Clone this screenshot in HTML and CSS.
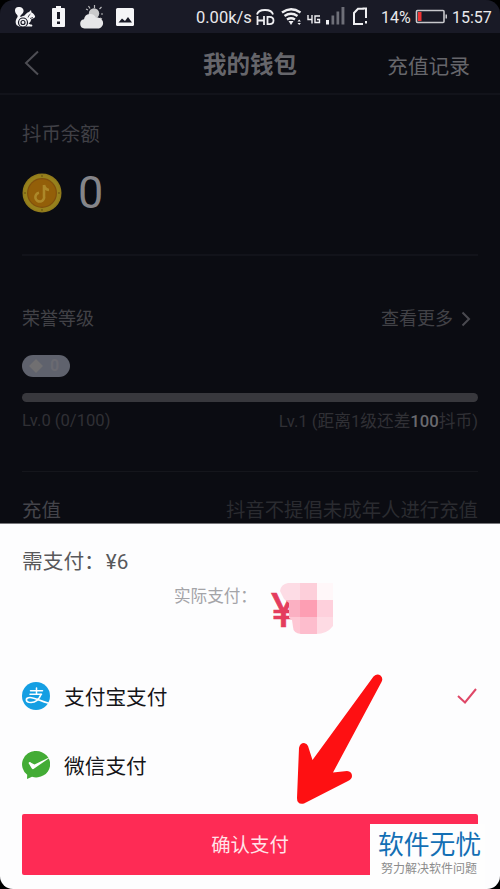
FILE: index.html
```html
<!DOCTYPE html>
<html lang="zh-CN">
<head>
<meta charset="utf-8">
<title>我的钱包</title>
<link rel="stylesheet" href="styles.css">
</head>
<body>
<div class="phone">
  <div class="status">
    <svg class="notices" viewBox="0 0 140 33">
      <g fill="#f5f5f7">
        <path d="M19.500 7c-3-.5-4.500 1-4.500 3.500 0 4 3.500 4 2.500 6.500-2 3-2.500 5-1 8l2.500 1.500h13c1-1.500 0-2-1.500-2l-2-1c2-1 2.500-3 2.500-4l2-1c1.500-.5 2.500-1.500 2-2.500-1-2-2-3-3.500-3.500l-.5-2.500-2 2c-2 .5-3.500 2-4.500 3.500-2 .5-3 1-4 1.500-.5-1 0-1.500 1-2.500 3.500-2.500 2.500-7-2-7.500z"/>
        <path d="M54 8h2V6h5v2h3q1 0 1 1v17q0 1-1 1H53q-1 0-1-1V9q0-1 1-1z"/>
        <rect x="116" y="8" width="18" height="18" rx="1.5"/>
      </g>
      <path d="M28 17.500q1-3 2.500-3.500M30 18.500l3-1" stroke="#191a26" stroke-width=".8" fill="none"/>
      <circle cx="23" cy="22.500" r="4.500" fill="#f5f5f7" stroke="#191a26" stroke-width="1.200"/>
      <circle cx="23" cy="22.500" r="2" fill="#f5f5f7" stroke="#191a26" stroke-width="1.200"/>
      <path d="M58.500 12v7M58.500 21.500v2.500" stroke="#191a26" stroke-width="3"/>
      <path d="M118.500 22.500l3.500-4 3 2.500 3-4 4 5.500z" fill="#191a26"/>
      <g stroke="#b7b7ba" stroke-width="1.200"><path d="M94.500 5v3M86 9l2 1M101.500 7l-2 2M101 14h2M100 18l2 1M88.500 6l1.500 2.500"/></g>
      <circle cx="94" cy="13.500" r="5.200" fill="#c9c9cb"/>
      <path d="M84.500 28.500a4.700 4.700 0 0 1-.5-9.300 6.300 6.300 0 0 1 12-1.500 5.500 5.500 0 0 1 3 10.800z" fill="#e6e6e8"/>
    </svg>
    <span class="speed">0.00k/s</span>
    <svg class="signals" viewBox="252 0 120 33">
      <g fill="none" stroke="#efeff2" stroke-width="1.800">
        <path d="M257 14.500q1-4.500 8-4.500t8 4.500M257.500 16v9M264 16v9M257.500 20.500h6.500M267.500 16.900v7.200h2q4 0 4-3.600t-4-3.600z"/>
        <path d="M282 12.500q9-6.500 18.500 0M284.500 16q6.500-4.500 13 0M287 19.500q4-2.500 8 0" stroke-width="2.400"/>
        <path d="M308 15v4.500h4.500M312 15v8.500M320 16h-5v6.500h4.500v-3h-2.500" stroke-width="1.400"/>
        <path d="M362.500 8.500H366V18M366 21v2.500M363 24h-9V13l4-4.200h6" stroke-width="2"/>
      </g>
      <path d="M288.500 21h5l-2.500 4zM297.500 21.500l1.700-2 1.700 2zm0 1.400h3.400l-1.700 2z" fill="#efeff2"/>
      <path d="M326 20h3v4.500h-3z" fill="#efeff2"/>
      <path d="M331.500 15.500h2.700v9h-2.700zM336.500 11.500h2.700v13h-2.700zM341.500 7h2.900v17.500h-2.900z" fill="#6e6f78"/>
    </svg>
    <span class="percent">14%</span>
    <svg class="battery" viewBox="0 0 34 18">
      <rect x="1.500" y="2.500" width="27.500" height="12" rx="1" fill="none" stroke="#c8c8cc" stroke-width="1.600"/>
      <path d="M3 4h3.500v9H3z" fill="#ee3434"/><path d="M30.500 6.500h1.500v4h-1.500z" fill="#c8c8cc"/>
    </svg>
    <span class="clock">15:57</span>
  </div>

  <div class="header">
    <svg class="back" viewBox="0 0 16 26"><path d="M14 1.500L2 13l12 11.500" /></svg>
    <h1>我的钱包</h1>
    <span class="records">充值记录</span>
  </div>

  <section class="balance">
    <div class="label">抖币余额</div>
    <div class="amount">
      <svg class="coin" viewBox="0 0 40 40">
        <circle cx="20" cy="20" r="19.500" fill="#917b1c"/>
        <circle cx="20" cy="20" r="18" fill="#97811c"/>
        <circle cx="20" cy="20" r="15" fill="#81500e"/>
        <circle cx="20" cy="20" r="13.800" fill="#935f09"/>
        <path d="M22 12v11a4.400 4.400 0 1 1-5-3.200M22 12q1 4.500 5 5" fill="none" stroke="#ac8829" stroke-width="2.600"/>
        <g fill="#5e4711"><circle cx="20" cy="3" r=".8"/><circle cx="20" cy="37" r=".8"/><circle cx="3" cy="20" r=".8"/><circle cx="37" cy="20" r=".8"/></g>
      </svg>
      <span>0</span>
    </div>
  </section>

  <section class="honor">
    <div class="row titles"><span>荣誉等级</span><span class="more">查看更多<svg viewBox="0 0 10 16"><path d="M1.500 1.500L8 8l-6.500 6.500"/></svg></span></div>
    <div class="badge"><svg viewBox="0 0 16 16"><path d="M8 1l7 7-7 7-7-7z"/></svg><span>0</span></div>
    <div class="track"></div>
    <div class="row levels"><span class="lv0">Lv.0 (0/100)</span><span class="lv1">Lv.1 (距离1级还差<b>100</b>抖币)</span></div>
  </section>

  <section class="row recharge"><span>充值</span><span class="notice">抖音不提倡未成年人进行充值</span></section>

  <div class="sheet">
    <div class="due">需支付：<span>¥6</span></div>
    <div class="actual">
      <span>实际支付：</span>
      <div class="price"><span class="yen">¥</span>
        <svg class="mosaic" viewBox="0 0 54 51">
          <clipPath id="smudge"><path d="M9 0H54V43Q48 51 37 51H22Q14 50 14 44L13 37 10 35V20L5 16 1 8Q2 1 9 0z"/></clipPath>
          <g clip-path="url(#smudge)">
            <path fill="#fddce5" d="M0 0h21v17H0z"/><path fill="#fdcfda" d="M21 0h17v17H21z"/><path fill="#fff7f9" d="M38 0h16v17H38z"/>
            <path fill="#fbb0c2" d="M0 17h21v17H0z"/><path fill="#fd9eb3" d="M21 17h17v17H21z"/><path fill="#fed0dc" d="M38 17h16v17H38z"/>
            <path fill="#fec7d4" d="M0 34h21v17H0z"/><path fill="#fdbdcd" d="M21 34h17v17H21z"/><path fill="#fedbe4" d="M38 34h16v17H38z"/>
          </g>
        </svg>
      </div>
    </div>
    <div class="method">
      <svg class="logo" viewBox="0 0 28 28">
        <circle cx="14" cy="14" r="14" fill="#159fe3"/>
        <g fill="none" stroke="#fff" stroke-linecap="round" stroke-linejoin="round">
          <path d="M8.500 8.800h12M14.500 6v6M8 12.200h11.500" stroke-width="1.500"/>
          <path d="M19 12.500c-2 5-6 8-10 8-6 0-6-5-1-5 5 0 11 4 18 5.500" stroke-width="1.700"/>
        </g>
      </svg>
      <span>支付宝支付</span>
      <svg class="check" viewBox="0 0 22 18"><path d="M2 9l7 6.500L20 2"/></svg>
    </div>
    <div class="method">
      <svg class="logo" viewBox="0 0 28 28">
        <path d="M14 0a14 13.200 0 1 1-4 25.800L5 28l.2-4.200A13.300 13.300 0 0 1 14 0z" fill="#43ac35"/>
        <path d="M6.500 12q1-2 3 0l3 1.500L27 6.500v.7L11.500 18q-1.500.5-2-1z" fill="#fff"/>
      </svg>
      <span>微信支付</span>
    </div>
    <div class="confirm">确认支付</div>
  </div>

  <svg class="arrow" viewBox="290 670 100 140"><path d="M373.500 676.500Q377 673 380.500 675.500Q383.500 678.500 381.500 682L333 772.500L347 771Q352 771.500 352 776Q352 779 348 781L304 803.500Q297 805 297 798L299 748Q300 743 304 743Q307 743.500 308 746L312.500 760z" fill="#fe1012"/></svg>
  <div class="watermark"><strong>软件无忧</strong><span>努力解决软件问题</span></div>
</div>
</body>
</html>
```

FILE: styles.css
```css
* { box-sizing: border-box; }
body { margin: 0; background: #000; font-family: Roboto, "Noto Sans CJK SC", sans-serif; }
svg { display: block; flex: none; }
.phone { position: relative; width: 500px; height: 889px; overflow: hidden; border-radius: 14px 14px 13px 13px; background: #0b0c12; }
.status { display: flex; align-items: center; height: 33px; background: #191a26; color: #e9e9ec; font-size: 17px; line-height: 33px; white-space: nowrap; }
.notices { width: 140px; height: 33px; }
.speed { width: 112px; padding: 2px 0 0 56px; font-size: 16.500px; }
.signals { width: 120px; height: 33px; }
.percent { width: 43px; padding: 2px 0 0 9px; font-size: 16px; }
.battery { width: 34px; height: 18px; }
.clock { padding: 2px 0 0 3px; font-size: 16px; }
.header { display: grid; grid-template-columns: 1fr auto 1fr; align-items: center; height: 62px; padding: 0 30px 0 24px; border-bottom: 2px solid #12131a; color: #66666b; }
.back { width: 16px; height: 26px; fill: none; stroke: #4e4e54; stroke-width: 2; }
.header h1 { margin: 3px 0 0 6px; font-size: 23.500px; font-weight: 700; line-height: 30px; }
.records { justify-self: end; font-size: 20.700px; margin-top: 3px; }
.row { display: flex; justify-content: space-between; white-space: nowrap; }
section { margin: 0 22px; }
.balance { height: 161px; padding-top: 25px; border-bottom: 2px solid #12131a; }
.label { color: #404046; font-size: 19.400px; line-height: 30px; }
.amount { display: flex; align-items: center; gap: 16px; height: 56px; margin-top: 15px; color: #858589; font-size: 45px; line-height: 56px; }
.coin { width: 40px; height: 40px; }
.honor { height: 216px; padding-top: 47px; border-bottom: 1px solid #15161c; color: #424247; }
.titles { height: 32px; font-size: 18px; line-height: 32px; }
.more { display: flex; align-items: center; margin-right: 7px; }
.more svg { width: 10px; height: 16px; margin-left: 8px; fill: none; stroke: #4a4a50; stroke-width: 2; }
.badge { display: flex; align-items: center; width: 48px; height: 22px; margin-top: 20px; padding-left: 6px; border-radius: 11px; background: #5f626d; color: #6a6a71; font-size: 16px; font-weight: 700; line-height: 22px; }
.badge svg { width: 16px; height: 16px; margin-right: 6px; fill: #706f71; }
.track { height: 9px; margin-top: 16px; border-radius: 5px; background: #38383d; }
.levels { height: 28px; margin-top: 6px; color: #303035; font-size: 16.700px; line-height: 28px; }
.lv0 { font-size: 16.600px; line-height: 26px; }
.levels b { color: #69696e; font-weight: 500; }
.recharge { height: 51px; padding-top: 24px; color: #44444a; font-size: 19.400px; line-height: 30px; }
.notice { color: #2a2b30; }
.sheet { height: 366px; padding: 21px 22px 0; border-top: 1px solid #77777b; background: #fdfdfe; }
.due { height: 34px; color: #58585b; font-size: 20.700px; line-height: 34px; }
.due span { margin-left: 1px; }
.actual { display: flex; height: 69px; padding-left: 152px; color: #a4a4a8; font-size: 16.600px; line-height: 36px; }
.price { position: relative; width: 80px; margin-left: 14px; color: #e43d5e; }
.yen { display: block; padding-top: 14px; font-size: 48px; font-weight: 400; line-height: 36px; -webkit-text-stroke: .6px #e43d5e; }
.mosaic { position: absolute; left: 8px; top: 4px; width: 54px; height: 51px; }
.method { display: flex; align-items: center; height: 69px; color: #151518; font-size: 20.700px; line-height: 30px; }
.method span { padding-top: 4px; }
.actual + .method { margin-top: 13px; }
.logo { width: 28px; height: 28px; margin-right: 14px; }
.check { width: 22px; height: 18px; margin-left: auto; fill: none; stroke: #df4767; stroke-width: 2; }
.confirm { height: 61px; margin-top: 15px; border-radius: 2px; background: #fe2b55; color: #ffe3e8; font-size: 19.400px; line-height: 63px; text-align: center; }
.arrow { position: absolute; left: 290px; top: 670px; width: 100px; height: 140px; }
.watermark { position: absolute; left: 370px; top: 824px; width: 115px; height: 65px; padding: 5px 0 0 8px; background: #fefefe; white-space: nowrap; }
.watermark strong { display: block; color: #136fb4; font-size: 25.800px; font-weight: 400; line-height: 32px; }
.watermark span { display: block; padding-left: 3px; color: #8c8c8c; font-size: 12px; line-height: 16px; }
```
